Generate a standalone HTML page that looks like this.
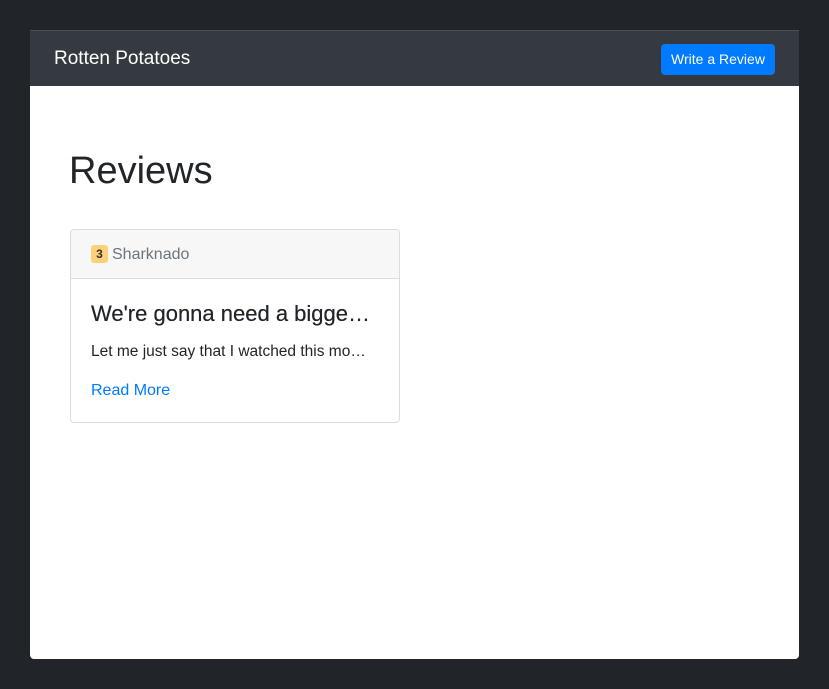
<!DOCTYPE html>
<html><head><meta charset="utf-8"><style>
*{box-sizing:border-box;margin:0;padding:0}
body{width:829px;height:689px;background:#212529;font-family:"Liberation Sans",sans-serif;position:relative;overflow:hidden}
.win{position:absolute;left:30px;top:30px;width:769px;height:629px;background:#fff;border-radius:0 0 4px 4px;overflow:hidden}
.nav{height:56px;background:#343a40;border-top:1px solid #4a5057;position:relative}
.brand{position:absolute;left:24px;top:17px;color:#fff;font-size:19px}
.btn{position:absolute;left:631px;top:13px;width:114px;height:31px;background:#007bff;color:#fff;border-radius:4px;font-size:14px;text-align:center;line-height:31px}
h1{position:absolute;left:39px;top:120px;font-size:38px;font-weight:400;color:#212529}
.card{position:absolute;left:40px;top:199px;width:330px;height:194px;border:1px solid #dcdcdc;border-radius:4px;overflow:hidden}
.ch{height:49px;background:#f7f7f7;border-bottom:1px solid #dcdcdc;padding:15px 20px;font-size:16px;color:#6c757d}
.badge{display:inline-block;width:17px;height:18px;background:#ffd07a;border-radius:3px;color:#333;font-size:12px;font-weight:bold;text-align:center;line-height:18px;vertical-align:1px;margin-right:4px}
.t{position:absolute;left:20px;top:71px;font-size:22px;color:#212529;text-shadow:0 0 .4px #212529}
.p{position:absolute;left:20px;top:113px;font-size:15.5px;color:#212529}
.a{position:absolute;left:20px;top:152px;font-size:16px;color:#007bff}
</style></head><body>
<div class="win">
<div class="nav"><div class="brand">Rotten Potatoes</div><div class="btn">Write a Review</div></div>
<h1>Reviews</h1>
<div class="card">
<div class="ch"><span class="badge">3</span>Sharknado</div>
<div class="t">We're gonna need a bigge…</div>
<div class="p">Let me just say that I watched this mo…</div>
<div class="a">Read More</div>
</div>
</div>
</body></html>
